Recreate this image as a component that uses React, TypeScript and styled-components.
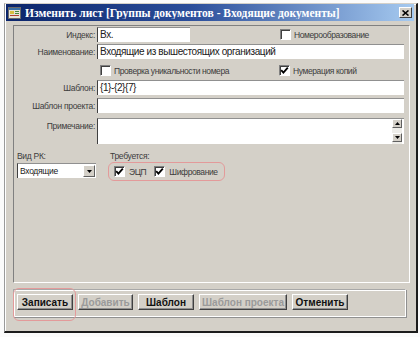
import styled, { createGlobalStyle, css } from "styled-components";

const GlobalStyle = createGlobalStyle`
  html, body {
    margin: 0;
    padding: 0;
    background: #fbfbfb;
  }
  body {
    font-family: "Liberation Sans", Arial, sans-serif;
  }
`;

const Page = styled.div`
  padding: 3px 0 0 4px;
`;

const Window = styled.div`
  box-sizing: border-box;
  width: 414px;
  height: 330px;
  background: #d4d0c8;
  border-left: 1px solid #9a9a9a;
  border-top: 1px solid #d4d0c8;
  border-right: 2px solid #1c1c1c;
  border-bottom: 2px solid #1c1c1c;
  box-shadow: inset 1px 1px #ffffff;
  padding: 0 2px 0 1px;
  display: flex;
  flex-direction: column;
`;

const TitleBar = styled.div`
  height: 17px;
  display: flex;
  align-items: center;
  padding: 0 2px;
  background: linear-gradient(to right, #0a246a 0%, #2a4d9a 45%, #a6caf0 100%);
`;

const TitleText = styled.span`
  flex: 1;
  margin-left: 4px;
  color: #ffffff;
  font-family: "Liberation Serif", "Times New Roman", serif;
  font-weight: bold;
  font-size: 11.5px;
  white-space: nowrap;
  overflow: hidden;
`;

const CloseButton = styled.div`
  box-sizing: border-box;
  width: 13px;
  height: 11px;
  background: #d4d0c8;
  border: 1px solid;
  border-color: #ffffff #404040 #404040 #ffffff;
  display: flex;
  align-items: center;
  justify-content: center;
`;

const Body = styled.div`
  padding: 4px 4px 0 7px;
  display: flex;
  flex-direction: column;
`;

const Panel = styled.div`
  box-sizing: border-box;
  height: 258px;
  border: 1px solid;
  border-color: #808080 #ffffff #ffffff #808080;
  padding: 0 5px 0 0;
  display: flex;
  flex-direction: column;
`;

const Row = styled.div<{ $top: number; $h: number }>`
  display: grid;
  grid-template-columns: 81px 1fr;
  column-gap: 2px;
  margin-top: ${(p) => p.$top}px;
  height: ${(p) => p.$h}px;
`;

const smallText = css`
  font-size: 8.5px;
  letter-spacing: -0.3px;
  color: #3c3c3c;
  white-space: nowrap;
`;

const Label = styled.div<{ $alignTop?: boolean }>`
  ${smallText};
  text-align: right;
  align-self: ${(p) => (p.$alignTop ? "start" : "center")};
  padding-top: ${(p) => (p.$alignTop ? "3px" : "0")};
`;

const Split = styled.div<{ $first?: number; $indent?: number }>`
  display: grid;
  grid-template-columns: ${(p) => p.$first ?? 183}px 1fr;
  padding-left: ${(p) => p.$indent ?? 0}px;
  align-items: center;
`;

const fieldBorder = css`
  box-sizing: border-box;
  background: #ffffff;
  border-top: 1px solid #909090;
  border-left: 1px solid #404040;
`;

const Field = styled.div<{ $w?: number }>`
  ${fieldBorder};
  width: ${(p) => (p.$w ? `${p.$w}px` : "100%")};
  height: 100%;
  padding: 0 2px;
  font-size: 10px;
  letter-spacing: -0.4px;
  line-height: 14px;
  color: #202020;
  white-space: nowrap;
`;

const NoteBox = styled.div`
  ${fieldBorder};
  height: 100%;
  display: flex;
  justify-content: flex-end;
`;

const ScrollCol = styled.div`
  width: 10px;
  margin: 0 2px 0 0;
  display: flex;
  flex-direction: column;
  justify-content: space-between;
  padding: 0 0 2px;
  background: #eeede9;
`;

const ScrollBtn = styled.div`
  box-sizing: border-box;
  width: 10px;
  height: 9px;
  background: #d4d0c8;
  border: 1px solid;
  border-color: #ffffff #606060 #606060 #ffffff;
  display: flex;
  align-items: center;
  justify-content: center;
`;

const CheckItem = styled.label<{ $gap?: number }>`
  ${smallText};
  letter-spacing: -0.4px;
  display: flex;
  align-items: center;
  gap: ${(p) => p.$gap ?? 3}px;
`;

const Box = styled.span`
  box-sizing: border-box;
  width: 11px;
  height: 11px;
  background: #ffffff;
  border: 1px solid;
  border-color: #808080 #ffffff #ffffff #808080;
  box-shadow: inset 1px 1px #404040;
  display: flex;
  align-items: center;
  justify-content: center;
`;

const Lower = styled.div`
  margin-top: 7px;
  padding-left: 3px;
  display: flex;
  gap: 12px;
`;

const Column = styled.div<{ $w?: number }>`
  display: flex;
  flex-direction: column;
  width: ${(p) => (p.$w ? `${p.$w}px` : "auto")};
`;

const SmallLabel = styled.div<{ $indent?: number }>`
  ${smallText};
  height: 11px;
  line-height: 10px;
  padding-left: ${(p) => p.$indent ?? 0}px;
`;

const Select = styled.div`
  ${fieldBorder};
  ${smallText};
  color: #202020;
  margin-top: 1px;
  height: 15px;
  display: flex;
  align-items: center;
  justify-content: space-between;
  padding: 0 1px 0 2px;
`;

const SelectBtn = styled.div`
  box-sizing: border-box;
  width: 12px;
  height: 12px;
  background: #d4d0c8;
  border: 1px solid;
  border-color: #ffffff #606060 #606060 #ffffff;
  display: flex;
  align-items: center;
  justify-content: center;
`;

const MarkedGroup = styled.div`
  box-sizing: border-box;
  height: 19px;
  display: flex;
  align-items: center;
  gap: 8px;
  padding: 0 6px 0 5px;
  border: 1px solid #e39a9a;
  border-radius: 6px;
`;

const ButtonBar = styled.div`
  box-sizing: border-box;
  width: 393px;
  height: 28px;
  margin-top: 6px;
  border: 1px solid;
  border-color: #a8a8a8 #ffffff #ffffff #a8a8a8;
  box-shadow: inset 1px 1px #ffffff, 1px 1px #909090;
  padding: 4px 0 0 3px;
  display: flex;
  gap: 5px;
`;

const Button = styled.div<{ $w: number; $disabled?: boolean; $marked?: boolean }>`
  position: relative;
  box-sizing: border-box;
  width: ${(p) => p.$w}px;
  height: 16px;
  background: #d4d0c8;
  border: 1px solid;
  border-color: #ffffff #404040 #404040 #ffffff;
  box-shadow: inset -1px -1px #909090;
  display: flex;
  align-items: center;
  justify-content: center;
  font-size: 10px;
  font-weight: bold;
  color: ${(p) => (p.$disabled ? "#9a9a9a" : "#111111")};
  white-space: nowrap;
  ${(p) =>
    p.$marked &&
    css`
      &::after {
        content: "";
        position: absolute;
        left: -5px;
        right: -4px;
        top: -7px;
        bottom: -12px;
        border: 1px solid #e39a9a;
        border-radius: 6px;
      }
    `}
`;

const Check = ({ on }: { on?: boolean }) => (
  <Box>
    {on && (
      <svg width="9" height="9" viewBox="0 0 9 9">
        <path d="M1.2 4.2 L3.4 6.6 L7.8 1.6" fill="none" stroke="#000" strokeWidth="1.8" />
      </svg>
    )}
  </Box>
);

const Arrow = ({ up }: { up?: boolean }) => (
  <svg width="5" height="3" viewBox="0 0 5 3">
    <path d={up ? "M0 3 L2.5 0 L5 3 Z" : "M0 0 L5 0 L2.5 3 Z"} fill="#000" />
  </svg>
);

const AppIcon = () => (
  <svg width="13" height="12" viewBox="0 0 13 12">
    <rect x="0.5" y="0.5" width="12" height="11" fill="#e8e4d8" stroke="#6a6a6a" />
    <rect x="1" y="1" width="11" height="2" fill="#3a6ea5" />
    <rect x="2" y="4" width="4" height="3" fill="#d8c040" />
    <rect x="7" y="4" width="4" height="1" fill="#4a8a3a" />
    <rect x="7" y="6" width="4" height="1" fill="#4a8a3a" />
    <rect x="2" y="8" width="9" height="1" fill="#b04030" />
  </svg>
);

const App = () => {
  return (
    <Page>
      <GlobalStyle />
      <Window>
        <TitleBar>
          <AppIcon />
          <TitleText>Изменить лист [Группы документов - Входящие документы]</TitleText>
          <CloseButton>
            <svg width="7" height="6" viewBox="0 0 7 6">
              <path d="M0.5 0.5 L6.5 5.5 M6.5 0.5 L0.5 5.5" stroke="#000" strokeWidth="1.6" />
            </svg>
          </CloseButton>
        </TitleBar>
        <Body>
          <Panel>
            <Row $top={1} $h={15}>
              <Label>Индекс:</Label>
              <Split>
                <Field $w={93}>Вх.</Field>
                <CheckItem>
                  <Check />
                  Номерообразование
                </CheckItem>
              </Split>
            </Row>
            <Row $top={2} $h={15}>
              <Label>Наименование:</Label>
              <Field>Входящие из вышестоящих организаций</Field>
            </Row>
            <Row $top={4} $h={15}>
              <span />
              <Split $first={179} $indent={3}>
                <CheckItem>
                  <Check />
                  Проверка уникальности номера
                </CheckItem>
                <CheckItem>
                  <Check on />
                  Нумерация копий
                </CheckItem>
              </Split>
            </Row>
            <Row $top={2} $h={15}>
              <Label>Шаблон:</Label>
              <Field>{"{1}-{2}{7}"}</Field>
            </Row>
            <Row $top={3} $h={15}>
              <Label>Шаблон проекта:</Label>
              <Field />
            </Row>
            <Row $top={5} $h={26}>
              <Label $alignTop>Примечание:</Label>
              <NoteBox>
                <ScrollCol>
                  <ScrollBtn>
                    <Arrow up />
                  </ScrollBtn>
                  <ScrollBtn>
                    <Arrow />
                  </ScrollBtn>
                </ScrollCol>
              </NoteBox>
            </Row>
            <Lower>
              <Column $w={79}>
                <SmallLabel>Вид РК:</SmallLabel>
                <Select>
                  Входящие
                  <SelectBtn>
                    <Arrow />
                  </SelectBtn>
                </Select>
              </Column>
              <Column>
                <SmallLabel $indent={2}>Требуется:</SmallLabel>
                <MarkedGroup>
                  <CheckItem $gap={4}>
                    <Check on />
                    ЭЦП
                  </CheckItem>
                  <CheckItem $gap={4}>
                    <Check on />
                    Шифрование
                  </CheckItem>
                </MarkedGroup>
              </Column>
            </Lower>
          </Panel>
          <ButtonBar>
            <Button $w={56} $marked>Записать</Button>
            <Button $w={55} $disabled>Добавить</Button>
            <Button $w={56}>Шаблон</Button>
            <Button $w={88} $disabled>Шаблон проекта</Button>
            <Button $w={56}>Отменить</Button>
          </ButtonBar>
        </Body>
      </Window>
    </Page>
  );
};

export default App;
